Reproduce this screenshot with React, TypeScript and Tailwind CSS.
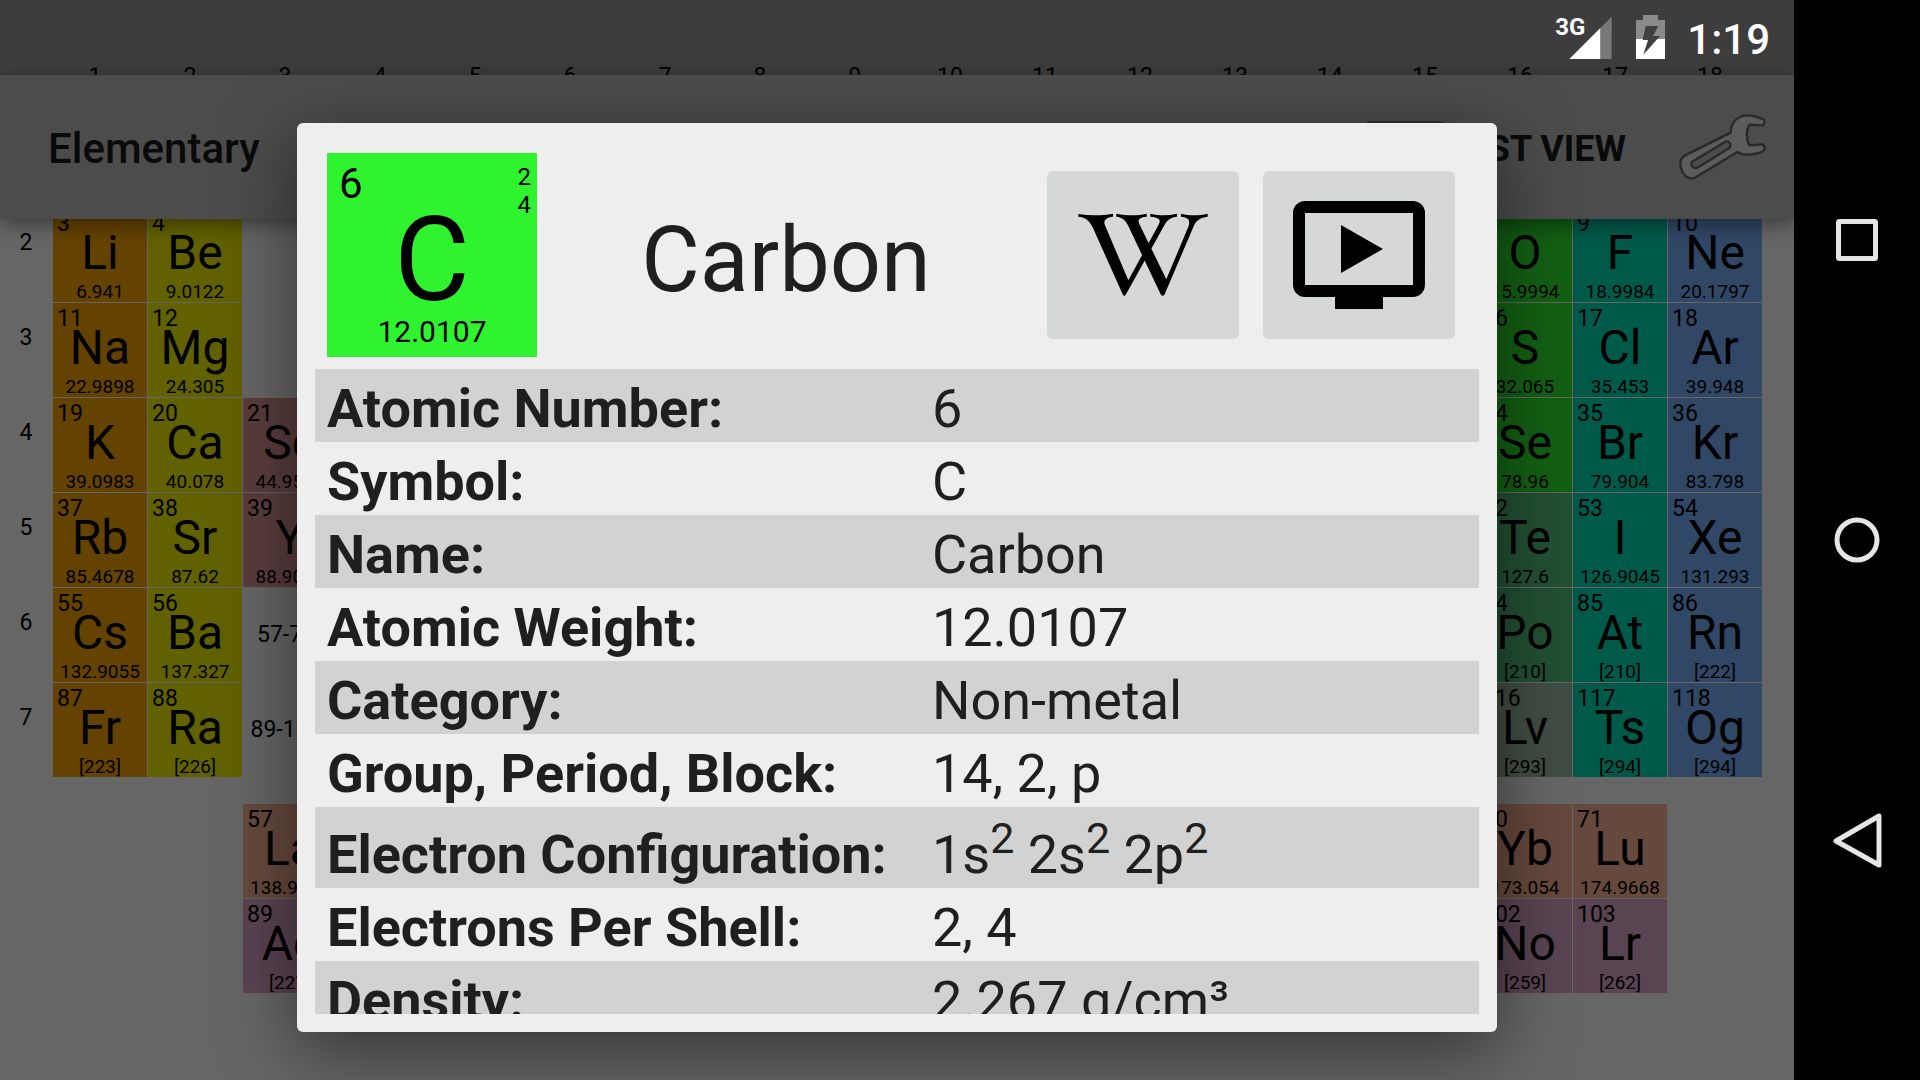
import React from "react";
import { MdOndemandVideo } from "react-icons/md";

type Cell = { n: string; s: string; w: string; col: number; row: number; tone: string };

const ALKALI = "bg-[#644200]";
const EARTH = "bg-[#616100]";
const METAL = "bg-[#5a3d3d]";
const NONMETAL = "bg-[#136013]";
const SEMIMETAL = "bg-[#225033]";
const POOR = "bg-[#404d44]";
const HALOGEN = "bg-[#005a4a]";
const NOBLE = "bg-[#314766]";
const LANTHANIDE = "bg-[#66493d]";
const ACTINIDE = "bg-[#5a4452]";

const cells: Cell[] = [
  { n: "3", s: "Li", w: "6.941", col: 1, row: 1, tone: ALKALI },
  { n: "4", s: "Be", w: "9.0122", col: 2, row: 1, tone: EARTH },
  { n: "8", s: "O", w: "15.9994", col: 16, row: 1, tone: NONMETAL },
  { n: "9", s: "F", w: "18.9984", col: 17, row: 1, tone: HALOGEN },
  { n: "10", s: "Ne", w: "20.1797", col: 18, row: 1, tone: NOBLE },
  { n: "11", s: "Na", w: "22.9898", col: 1, row: 2, tone: ALKALI },
  { n: "12", s: "Mg", w: "24.305", col: 2, row: 2, tone: EARTH },
  { n: "16", s: "S", w: "32.065", col: 16, row: 2, tone: NONMETAL },
  { n: "17", s: "Cl", w: "35.453", col: 17, row: 2, tone: HALOGEN },
  { n: "18", s: "Ar", w: "39.948", col: 18, row: 2, tone: NOBLE },
  { n: "19", s: "K", w: "39.0983", col: 1, row: 3, tone: ALKALI },
  { n: "20", s: "Ca", w: "40.078", col: 2, row: 3, tone: EARTH },
  { n: "21", s: "Sc", w: "44.9559", col: 3, row: 3, tone: METAL },
  { n: "34", s: "Se", w: "78.96", col: 16, row: 3, tone: NONMETAL },
  { n: "35", s: "Br", w: "79.904", col: 17, row: 3, tone: HALOGEN },
  { n: "36", s: "Kr", w: "83.798", col: 18, row: 3, tone: NOBLE },
  { n: "37", s: "Rb", w: "85.4678", col: 1, row: 4, tone: ALKALI },
  { n: "38", s: "Sr", w: "87.62", col: 2, row: 4, tone: EARTH },
  { n: "39", s: "Y", w: "88.9059", col: 3, row: 4, tone: METAL },
  { n: "52", s: "Te", w: "127.6", col: 16, row: 4, tone: SEMIMETAL },
  { n: "53", s: "I", w: "126.9045", col: 17, row: 4, tone: HALOGEN },
  { n: "54", s: "Xe", w: "131.293", col: 18, row: 4, tone: NOBLE },
  { n: "55", s: "Cs", w: "132.9055", col: 1, row: 5, tone: ALKALI },
  { n: "56", s: "Ba", w: "137.327", col: 2, row: 5, tone: EARTH },
  { n: "84", s: "Po", w: "[210]", col: 16, row: 5, tone: SEMIMETAL },
  { n: "85", s: "At", w: "[210]", col: 17, row: 5, tone: HALOGEN },
  { n: "86", s: "Rn", w: "[222]", col: 18, row: 5, tone: NOBLE },
  { n: "87", s: "Fr", w: "[223]", col: 1, row: 6, tone: ALKALI },
  { n: "88", s: "Ra", w: "[226]", col: 2, row: 6, tone: EARTH },
  { n: "116", s: "Lv", w: "[293]", col: 16, row: 6, tone: POOR },
  { n: "117", s: "Ts", w: "[294]", col: 17, row: 6, tone: HALOGEN },
  { n: "118", s: "Og", w: "[294]", col: 18, row: 6, tone: NOBLE },
  { n: "57", s: "La", w: "138.9055", col: 3, row: 8, tone: LANTHANIDE },
  { n: "70", s: "Yb", w: "173.054", col: 16, row: 8, tone: LANTHANIDE },
  { n: "71", s: "Lu", w: "174.9668", col: 17, row: 8, tone: LANTHANIDE },
  { n: "89", s: "Ac", w: "[227]", col: 3, row: 9, tone: ACTINIDE },
  { n: "102", s: "No", w: "[259]", col: 16, row: 9, tone: ACTINIDE },
  { n: "103", s: "Lr", w: "[262]", col: 17, row: 9, tone: ACTINIDE },
];

const series = [
  { label: "57-71", row: 5 },
  { label: "89-103", row: 6 },
];

const facts: { label: string; value: React.ReactNode; tall?: boolean }[] = [
  { label: "Atomic Number:", value: "6" },
  { label: "Symbol:", value: "C" },
  { label: "Name:", value: "Carbon" },
  { label: "Atomic Weight:", value: "12.0107" },
  { label: "Category:", value: "Non-metal" },
  { label: "Group, Period, Block:", value: "14, 2, p" },
  {
    label: "Electron Configuration:",
    tall: true,
    value: (
      <>
        1s<Sup>2</Sup> 2s<Sup>2</Sup> 2p<Sup>2</Sup>
      </>
    ),
  },
  { label: "Electrons Per Shell:", value: "2, 4" },
  { label: "Density:", value: "2.267 g/cm³" },
];

function Sup({ children }: { children: React.ReactNode }) {
  return <sup className="relative -top-5 align-baseline text-[43px] leading-none">{children}</sup>;
}

function StatusBar() {
  return (
    <div className="flex h-[75px] flex-col overflow-hidden bg-[#3d3d3d]">
      <div className="flex h-[64px] shrink-0 items-start justify-end pt-[15px] pr-6 text-white">
        <span className="text-2xl leading-6 font-bold">3G</span>
        <svg className="-ml-4 h-11 w-[43px]" viewBox="87 45 129 132" aria-label="Signal">
          <path d="M181 84L215 50V177H181Z" fill="#787878" />
          <path d="M88 177L181 84V177Z" fill="#fff" />
        </svg>
        <svg className="ml-6 h-11 w-[29px]" viewBox="291 45 87 132" aria-label="Battery">
          <path d="M312 45H357V60H378V117H291V60H312Z" fill="#8a8a8a" />
          <path d="M291 117H378V177H291Z" fill="#fff" />
          <path d="M320 78H358L342 108H363L313 164L327 120H311Z" fill="#404040" />
        </svg>
        <span className="ml-[22px] text-[42px] leading-[50px] font-medium">1:19</span>
      </div>
      <div className="grid shrink-0 grid-cols-[47px_repeat(18,minmax(0,1fr))] gap-px pr-[37px] text-center text-[23px] leading-[26px] text-black">
        <span />
        {Array.from({ length: 18 }, (_, i) => (
          <span key={i}>{i + 1}</span>
        ))}
      </div>
    </div>
  );
}

function AppBar() {
  return (
    <header className="relative flex h-36 items-center bg-[#4c4c4c] pr-7 pl-12 text-[#0a0a0a] shadow-[0_6px_18px_rgba(0,0,0,0.4)]">
      <h1 className="flex-1 pt-1 text-[42px] leading-[52px] font-medium">Elementary</h1>
      <span className="mr-3 h-[52px] w-[82px] rounded-md bg-[#303030]" />
      <button className="pt-1 text-4xl font-bold">LIST VIEW</button>
      <button aria-label="Settings" className="ml-[52px]">
        <svg className="h-[68px] w-[88px]" viewBox="414 340 264 204">
          <g stroke="#292929" strokeWidth="7" strokeLinejoin="round">
            <path
              fill="#5c5c5c"
              d="M421 490C420 476 430 470 440 465L572 399C572 366 596 346 625 347C645 348 660 354 671 359C676 365 674 373 668 377L630 375C618 385 618 420 628 437L669 434C676 441 675 450 669 455C650 466 612 470 592 457L467 533C452 541 436 532 429 520C423 510 421 500 421 490Z"
            />
            <path
              fill="#4c4c4c"
              d="M455 489Q456 486 460 484L556 426C570 422 576 438 567 446L472 504C460 509 452 499 455 489Z"
            />
          </g>
        </svg>
      </button>
    </header>
  );
}

function ElementCell({ cell }: { cell: Cell }) {
  return (
    <div
      className={`flex flex-col overflow-hidden ${cell.tone}`}
      style={{ gridColumn: cell.col + 1, gridRow: cell.row }}
    >
      <span className="pt-1 pl-1 text-[23px] leading-6">{cell.n}</span>
      <span className="text-center text-5xl leading-[33px]">{cell.s}</span>
      <span className="mt-auto text-center text-[19px] leading-[21px]">{cell.w}</span>
    </div>
  );
}

function PeriodicTable() {
  return (
    <div className="flex-1 overflow-hidden">
      <div className="-mt-[11px] grid grid-cols-[52px_repeat(18,minmax(0,1fr))] grid-rows-[repeat(6,94px)_25px_repeat(2,94px)] gap-px pr-8 text-black">
        {[2, 3, 4, 5, 6, 7].map((p) => (
          <span
            key={p}
            className="col-start-1 pt-[23px] text-center text-[23px] leading-6"
            style={{ gridRow: p - 1 }}
          >
            {p}
          </span>
        ))}
        {series.map((s) => (
          <span
            key={s.label}
            className="col-start-4 self-center pr-2 text-center text-[23px] leading-6"
            style={{ gridRow: s.row }}
          >
            {s.label}
          </span>
        ))}
        {cells.map((c) => (
          <ElementCell key={c.n} cell={c} />
        ))}
      </div>
    </div>
  );
}

function WikipediaMark() {
  return (
    <svg className="h-[110px] w-[160px]" viewBox="-6 0 480 330" aria-hidden="true">
      <path d="M40 42C75 47 110 47 144 41V50C122 52 114 62 120 76L190 241L282 72C289 58 280 52 256 50V41C285 47 310 47 336 41V50C318 52 309 58 300 72L183 283Q178 292 173 283L84 84C72 60 62 52 40 50Z" />
      <path d="M154 41C190 47 215 47 245 41V50C222 52 217 60 223 72L304 238L371 78C376 60 370 52 348 50V41C375 47 400 47 428 41V50C405 53 396 60 388 74L299 283Q293 292 287 283L190 78C182 60 172 52 154 50Z" />
    </svg>
  );
}

function ElementDialog() {
  return (
    <section
      role="dialog"
      aria-label="Carbon"
      className="flex w-full flex-col overflow-hidden rounded-md bg-[#eeeeee] text-[#1f1f1f] shadow-[0_18px_72px_rgba(0,0,0,0.5)]"
    >
      <div className="flex items-center px-[30px] pt-[30px] pb-3">
        <div className="flex h-[204px] w-[210px] flex-col bg-[#30f330] text-black">
          <div className="flex h-16 items-start justify-between pr-1.5 pl-3">
            <span className="pt-1.5 text-[42px] leading-[50px]">6</span>
            <span className="pt-2.5 text-right text-2xl leading-7">
              2<br />4
            </span>
          </div>
          <span className="text-center text-[116px] leading-[86px]">C</span>
          <span className="mt-auto pb-2.5 text-center text-3xl leading-[30px]">12.0107</span>
        </div>
        <h2 className="flex-1 pt-3 pr-3 text-center text-[90px] leading-none">Carbon</h2>
        <div className="flex gap-6 pr-3">
          <button
            aria-label="Wikipedia"
            className="flex h-[168px] w-[192px] items-center justify-center rounded-md bg-[#d6d8d7]"
          >
            <WikipediaMark />
          </button>
          <button
            aria-label="Video"
            className="flex h-[168px] w-[192px] items-center justify-center rounded-md bg-[#d6d8d7] text-black"
          >
            <MdOndemandVideo size={144} />
          </button>
        </div>
      </div>
      <div className="mx-[18px] mb-[18px] min-h-0 flex-1 overflow-hidden">
        <table className="w-full table-fixed border-collapse text-[54px] leading-[66px]">
          <colgroup>
            <col className="w-[53%]" />
            <col />
          </colgroup>
          <tbody>
            {facts.map((f) => (
              <tr key={f.label} className="odd:bg-[#d2d2d2]">
                <th
                  scope="row"
                  className={`${f.tall ? "pt-[15px]" : "pt-[7px]"} pl-3 text-left align-bottom font-bold whitespace-nowrap`}
                >
                  {f.label}
                </th>
                <td className="pt-[7px] align-bottom">{f.value}</td>
              </tr>
            ))}
          </tbody>
        </table>
      </div>
    </section>
  );
}

function NavBar() {
  return (
    <nav className="flex w-[126px] shrink-0 flex-col items-center justify-center gap-[240px] bg-black" aria-label="System">
      <button aria-label="Recent apps">
        <svg className="h-[60px] w-[60px]" viewBox="0 0 60 60" fill="none" stroke="#e6e6e6" strokeWidth="5">
          <rect x="11.5" y="11.5" width="37" height="37" rx="1" />
        </svg>
      </button>
      <button aria-label="Home">
        <svg className="h-[60px] w-[60px]" viewBox="0 0 60 60" fill="none" stroke="#e6e6e6" strokeWidth="5">
          <circle cx="30" cy="30" r="20" />
        </svg>
      </button>
      <button aria-label="Back">
        <svg
          className="h-[60px] w-[60px]"
          viewBox="0 0 60 60"
          fill="none"
          stroke="#e6e6e6"
          strokeWidth="5"
          strokeLinejoin="round"
        >
          <path d="M9 31L52 6V55Z" />
        </svg>
      </button>
    </nav>
  );
}

export default function App() {
  return (
    <div className="flex h-screen overflow-hidden bg-black font-['Roboto',sans-serif]">
      <main className="relative flex min-w-0 flex-1 flex-col overflow-hidden bg-[#666666]">
        <StatusBar />
        <AppBar />
        <PeriodicTable />
        <div className="absolute inset-0 flex px-[297px] pt-[123px] pb-12">
          <ElementDialog />
        </div>
      </main>
      <NavBar />
    </div>
  );
}
